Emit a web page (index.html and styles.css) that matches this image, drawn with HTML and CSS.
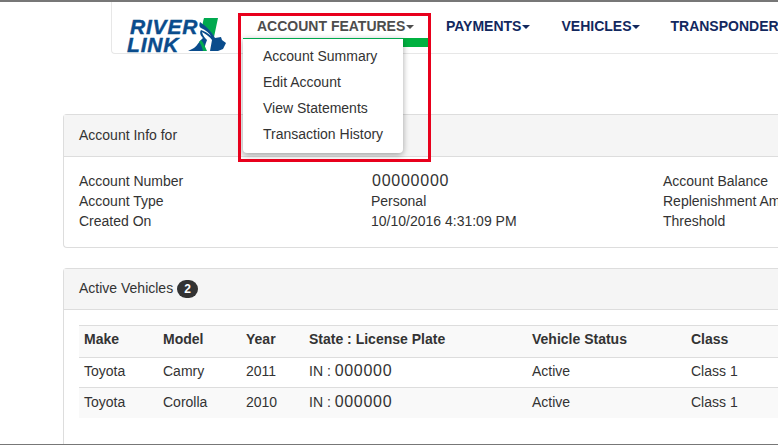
FILE: index.html
```html
<!DOCTYPE html>
<html lang="en">
<head>
<meta charset="utf-8">
<title>RiverLink Account</title>
<link rel="stylesheet" href="styles.css">
</head>
<body>
<div class="frame">
  <header class="navbar">
    <a class="brand">
      <span class="brand-text"><span class="brand-river">RIVER</span><span>LINK</span></span>
      <svg class="brand-mark" width="38" height="34" viewBox="0 0 38 34">
        <path d="M16 0H30L26 19C23 14 19 10 14 8C15 5 15 3 16 0Z" fill="#00a94f"/>
        <path d="M12 4C11 7 11 9 13 10C18 12 21 15 23 18C20 15 16 13 13 12C11 15 13 18 15 20C12 22 9 28 6 30L0 33H17C16 29 18 25 19 22C17 20 15 18 14 14C18 16 22 19 24 22L22 33H30L35 31L38 25L34 22L33 19L27 20C24 14 19 9 12 4Z" fill="#0a4c8c"/>
        <path d="M13 22C16 25 17 29 19 33H15C14 29 13 26 11 24Z" fill="#00a94f"/>
      </svg>
    </a>
    <nav class="nav">
      <div class="nav-item nav-active">ACCOUNT FEATURES<i class="caret"></i>
        <ul class="dropdown">
          <li>Account Summary</li>
          <li>Edit Account</li>
          <li>View Statements</li>
          <li>Transaction History</li>
        </ul>
        <div class="highlight"></div>
      </div>
      <div class="nav-item nav-pay">PAYMENTS<i class="caret"></i></div>
      <div class="nav-item nav-veh">VEHICLES<i class="caret"></i></div>
      <div class="nav-item">TRANSPONDERS<i class="caret"></i></div>
    </nav>
  </header>

  <main class="content">
    <section class="panel">
      <div class="panel-head">Account Info for</div>
      <div class="panel-body info">
        <div class="info-col col-a">
          <div>Account Number</div><div>Account Type</div><div>Created On</div>
        </div>
        <div class="info-col col-b">
          <div class="big">00000000</div><div>Personal</div><div>10/10/2016 4:31:09 PM</div>
        </div>
        <div class="info-col">
          <div>Account Balance</div><div>Replenishment Amount</div><div>Threshold</div>
        </div>
      </div>
    </section>

    <section class="panel panel-vehicles">
      <div class="panel-head">Active Vehicles <span class="badge">2</span></div>
      <div class="panel-body">
        <table class="table">
          <thead>
            <tr><th class="c1">Make</th><th class="c2">Model</th><th class="c3">Year</th><th class="c4">State : License Plate</th><th class="c5">Vehicle Status</th><th>Class</th></tr>
          </thead>
          <tbody>
            <tr><td>Toyota</td><td>Camry</td><td>2011</td><td>IN : <span class="plate">000000</span></td><td>Active</td><td>Class 1</td></tr>
            <tr><td>Toyota</td><td>Corolla</td><td>2010</td><td>IN : <span class="plate">000000</span></td><td>Active</td><td>Class 1</td></tr>
          </tbody>
        </table>
      </div>
    </section>
  </main>
</div>
</body>
</html>
```

FILE: styles.css
```css
* { box-sizing: border-box; }
html, body { margin: 0; padding: 0; }
body {
  width: 778px;
  height: 445px;
  overflow: hidden;
  background: #fff;
  font-family: "Liberation Sans", Arial, sans-serif;
  font-size: 14px;
  line-height: 20px;
  color: #333;
}
.frame {
  width: 778px;
  height: 445px;
  overflow: hidden;
  border-top: 2px solid #777;
  border-bottom: 1px solid #777;
}
.navbar {
  display: flex;
  width: 800px;
  height: 52px;
  margin-left: 111px;
  border: 1px solid #e7e7e7;
  border-top: 0;
  border-right: 0;
  border-bottom-left-radius: 4px;
  background: #fff;
}
.brand {
  display: flex;
  align-items: flex-start;
  width: 131px;
  padding: 16px 0 0 15px;
  flex: none;
}
.brand-text {
  display: flex;
  flex-direction: column;
  width: 73px;
  font-style: italic;
  font-weight: 700;
  font-size: 21px;
  line-height: 17.5px;
  letter-spacing: .8px;
  color: #0a4c8c;
  -webkit-text-stroke: .4px #0a4c8c;
}
.brand-river { margin-left: 3px; }
.brand-mark { margin: 0 0 0 -12px; flex: none; }
.nav { display: flex; padding-top: 14px; }
.nav-item {
  position: relative;
  margin-right: 30px;
  padding-left: 15px;
  font-weight: 700;
  font-size: 14px;
  line-height: 20px;
  color: #12285e;
  white-space: nowrap;
}
.nav-active { width: 184px; margin-right: 0; color: #4d4d4d; padding-left: 14px; }
.nav-active .caret { border-top-color: #4d4d4d; }
.nav-pay { padding-left: 19px; margin-right: 16px; }
.nav-veh { padding-left: 15px; margin-right: 15px; }
.caret {
  display: inline-block;
  margin-left: 1px;
  vertical-align: middle;
  border-top: 4px solid #12285e;
  border-left: 4px solid transparent;
  border-right: 4px solid transparent;
}
.highlight {
  position: absolute;
  left: -5px;
  top: -3px;
  width: 193px;
  height: 149px;
  border: 3px solid #e8001c;
  pointer-events: none;
  z-index: 3;
}
.dropdown {
  position: absolute;
  z-index: 2;
  top: 22px;
  left: 0;
  width: 160px;
  height: 115px;
  margin: 0;
  padding: 4px 0;
  list-style: none;
  background: #fff;
  border-radius: 0 0 4px 4px;
  box-shadow: 0 2px 6px rgba(0,0,0,.35);
  border-top: 1px solid #00a94f;
  font-weight: 400;
  color: #333;
}
.dropdown li { height: 26px; padding: 3px 20px; line-height: 20px; }
.nav-active::before {
  content: "";
  position: absolute;
  left: 0;
  top: 22px;
  width: 185px;
  height: 9px;
  background: #00b140;
  z-index: 1;
}
.content { width: 800px; margin: 60px 0 0 63px; }
.panel {
  border: 1px solid #ddd;
  border-right: 0;
  border-radius: 4px 0 0 4px;
  background: #fff;
  height: 134px;
}
.panel-vehicles { height: 220px; margin-top: 20px; }
.panel-head {
  height: 42px;
  padding: 10px 15px;
  background: #f5f5f5;
  border-bottom: 1px solid #ddd;
  font-size: 14px;
}
.panel-vehicles .panel-head { height: 41px; padding-top: 9px; }
.panel-body { padding: 15px; }
.info { display: flex; padding-top: 14px; }
.info-col { flex: none; }
.col-a { width: 292px; }
.col-b { width: 292px; }
.big { font-size: 16px; letter-spacing: .75px; padding-left: 1px; }
.badge {
  display: inline-block;
  min-width: 21px;
  height: 18px;
  padding: 0 7px;
  border-radius: 10px;
  background: #333;
  color: #fff;
  font-size: 12px;
  font-weight: 700;
  line-height: 18px;
  text-align: center;
}
.table {
  width: 740px;
  border-collapse: collapse;
  table-layout: fixed;
}
.table th, .table td {
  padding: 3px 5px;
  text-align: left;
  vertical-align: top;
  border-top: 1px solid #ddd;
  line-height: 20px;
}
.table th { height: 32px; }
.table td { height: 30px; }
.table tbody tr:nth-child(even) td { padding-top: 4px; }
.table thead tr, .table tbody tr:nth-child(even) { background: #f9f9f9; }
.c1 { width: 79px; }
.c2 { width: 83px; }
.c3 { width: 63px; }
.c4 { width: 223px; }
.c5 { width: 159px; }
.plate { font-size: 16px; letter-spacing: .7px; }
```
